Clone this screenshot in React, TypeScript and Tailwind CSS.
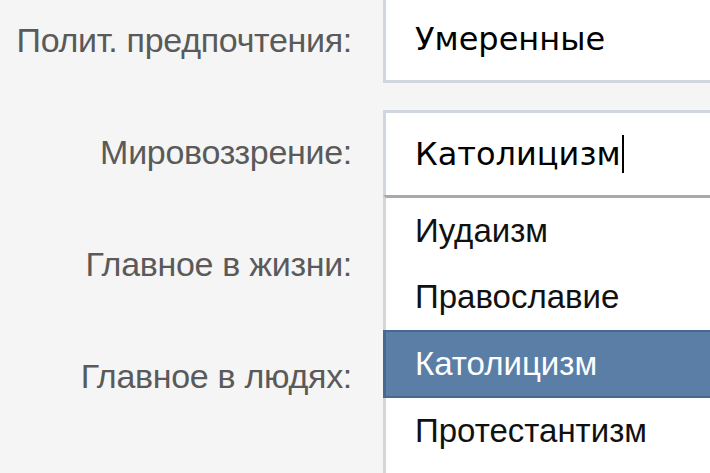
import React from "react";

const labelFont = { fontFamily: '"Liberation Sans", Arial, sans-serif' };
const inputFont = { fontFamily: '"DejaVu Sans", Verdana, sans-serif' };

const options = ["Иудаизм", "Православие", "Католицизм", "Протестантизм"];

function Row({ label, children }: { label: string; children?: React.ReactNode }) {
  return (
    <div className="flex items-center h-[85px]">
      <div
        className="w-[352px] shrink-0 text-right text-[34px] text-[#5a5a5a] tracking-[-0.3px] whitespace-nowrap"
        style={labelFont}
      >
        {label}
      </div>
      <div className="ml-[31px] flex-1 h-full">{children}</div>
    </div>
  );
}

export default function App() {
  const selected = "Католицизм";

  return (
    <div className="w-[710px] h-[473px] overflow-hidden bg-[#f5f5f5]">
      <div className="flex flex-col gap-[27px] mt-[-2px]">
        <Row label="Полит. предпочтения:">
          <div
            className="h-full bg-white border-l-[3px] border-b-[3px] border-[#cfd6de] flex items-center pl-[29px] text-[32px] text-black"
            style={inputFont}
          >
            Умеренные
          </div>
        </Row>

        <Row label="Мировоззрение:">
          <div className="relative h-full">
            <div
              className="h-full bg-white border-l-[3px] border-t-[3px] border-[#cfd6de] flex items-center pl-[29px] text-[32px] text-black"
              style={inputFont}
            >
              {selected}
              <span className="inline-block w-[2px] h-[38px] bg-black ml-[1px]" />
            </div>
            {/* dropdown list */}
            <div
              className="absolute left-0 right-0 top-full pb-[30px] border-t-[3px] border-[#a9a9a9] bg-white border-l-[3px] border-l-[#d6d6d6] z-10"
              style={labelFont}
            >
              {options.map((o) =>
                o === selected ? (
                  <div
                    key={o}
                    className="h-[68px] ml-[-3px] bg-[#5a7ea5] border-y-[2px] border-l-[3px] border-[#45698f] flex items-center pl-[29px] text-[33px] text-white"
                  >
                    {o}
                  </div>
                ) : (
                  <div key={o} className="h-[66px] flex items-center pl-[29px] text-[33px] text-[#111]">
                    {o}
                  </div>
                )
              )}
            </div>
          </div>
        </Row>

        <Row label="Главное в жизни:" />
        <Row label="Главное в людях:" />
      </div>
    </div>
  );
}
